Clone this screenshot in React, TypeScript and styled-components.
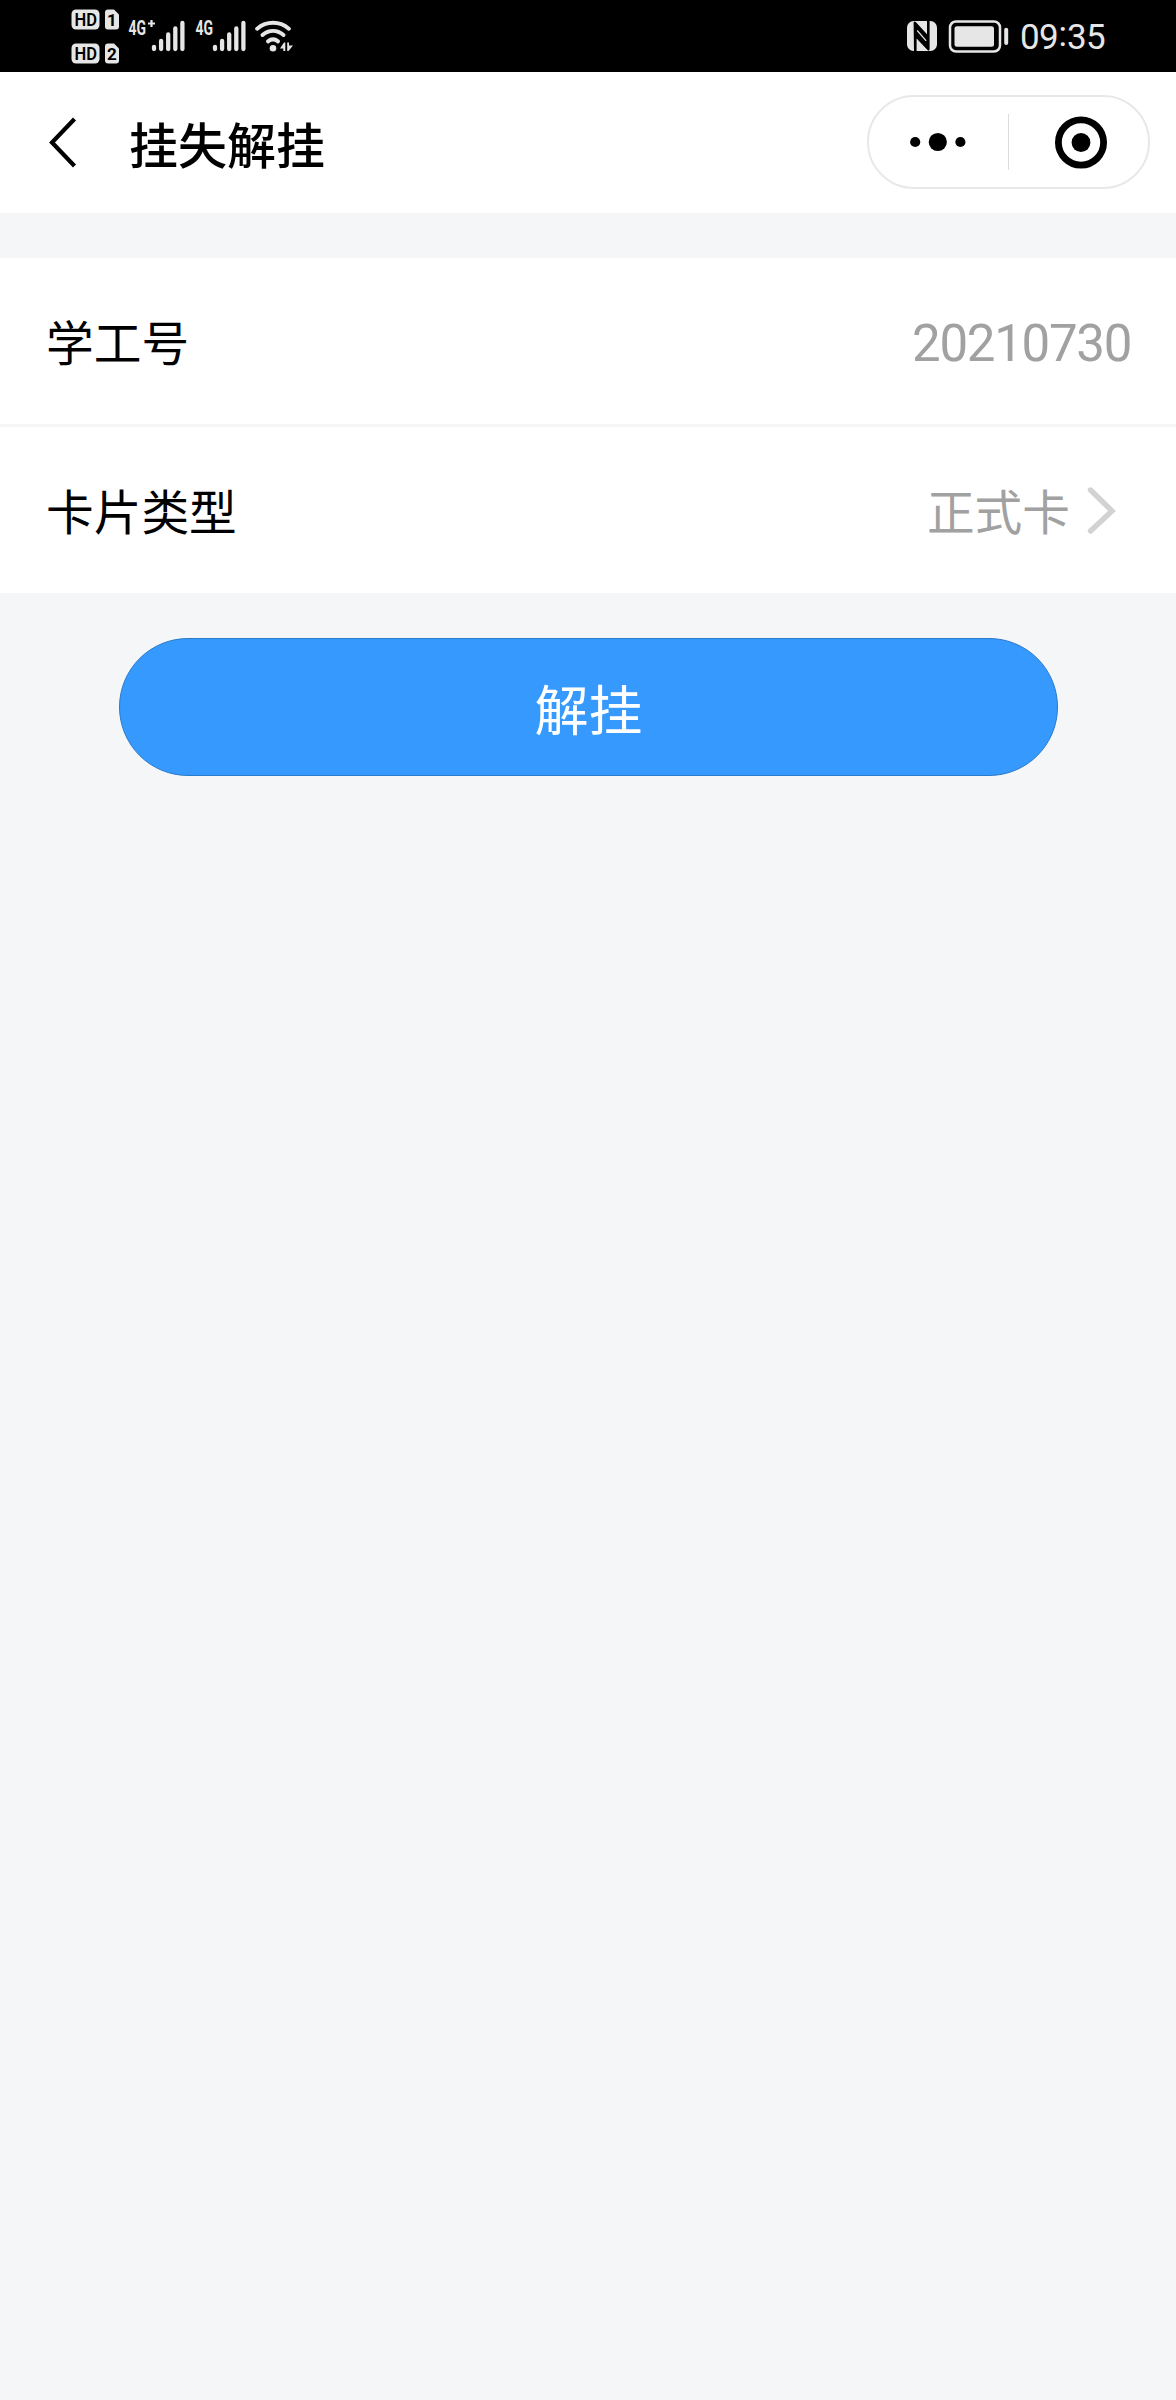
import React from 'react';
import styled, { createGlobalStyle } from 'styled-components';

const ink = '#e6e6e6';
const cjk = '"Noto Sans CJK SC", "Noto Sans", sans-serif';
const digits = 'Roboto, "Noto Sans", sans-serif';

const GlobalStyle = createGlobalStyle`
  * { box-sizing: border-box; }
  body { margin: 0; background: #f4f6f8; font-family: ${cjk}; }
`;

const Page = styled.div`
  display: flex;
  flex-direction: column;
  width: 1176px;
  min-height: 2400px;
  background: #f4f6f8;
`;

const StatusBar = styled.header`
  display: flex;
  justify-content: space-between;
  height: 72px;
  padding: 0 71px;
  background: #000;
  color: ${ink};
`;

const StatusGroup = styled.div`
  display: flex;
  height: 72px;
`;

const Glyph = styled.svg<{ $gap?: number }>`
  display: block;
  flex: none;
  margin-left: ${(p) => p.$gap ?? 0}px;
`;

const Clock = styled.time`
  display: flex;
  width: 85px;
  margin-left: 10px;
  padding-top: 2px;
  font-family: ${digits};
  font-size: 35px;
  line-height: 72px;
  letter-spacing: -0.7px;
  white-space: nowrap;
`;

const Colon = styled.span`
  width: 9.5px;
  margin-top: -3px;
  text-align: center;
`;

const NavBar = styled.nav`
  display: flex;
  align-items: center;
  height: 141px;
  padding: 0 26px 0 49px;
  background: #fff;
`;

const BackButton = styled.button`
  display: flex;
  width: 80px;
  padding: 0;
  border: 0;
  background: none;
`;

const Title = styled.h1`
  flex: 1;
  margin: 0;
  color: #000;
  font-size: 49px;
  font-weight: 500;
  line-height: 72px;
`;

const Capsule = styled.div`
  display: flex;
  align-items: center;
  width: 283px;
  height: 94px;
  margin-top: -1px;
  border: 2px solid #e8e8e8;
  border-radius: 47px;
`;

const CapsuleAction = styled.button`
  display: flex;
  flex: 1;
  justify-content: center;
  align-items: center;
  padding: 0;
  border: 0;
  background: none;
`;

const CapsuleDivider = styled.span`
  width: 1px;
  height: 56px;
  background: #dcdcdc;
`;

const Form = styled.main`
  display: flex;
  flex-direction: column;
  gap: 45px;
  padding-top: 45px;
`;

const Cells = styled.section`
  display: flex;
  flex-direction: column;
  gap: 3px;
`;

const Cell = styled.div`
  display: flex;
  align-items: center;
  justify-content: space-between;
  height: 166px;
  padding: 0 45px 0 46px;
  background: #fff;
  font-size: 47.7px;
  line-height: 72px;
`;

const Label = styled.span`
  margin-top: -1px;
  color: #000;
`;

const Value = styled.span`
  display: flex;
  align-items: center;
  margin-top: -1px;
  color: #a1a1a1;
`;

const NumericValue = styled(Value)`
  margin-top: 5px;
  font-family: ${digits};
  font-size: 51px;
  letter-spacing: -1.3px;
`;

const Submit = styled.button`
  align-self: center;
  width: 939px;
  height: 138px;
  margin-left: 1px;
  padding: 2px 0 0;
  border: 1px solid #2b7acb;
  border-radius: 69px;
  background: #3599fd;
  color: #fff;
  font-family: ${cjk};
  font-size: 54px;
  line-height: 80px;
`;

function HdBadges() {
  return (
    <Glyph width="49" height="72" fill={ink}>
      {[0, 34].map((dy, i) => (
        <g key={dy} transform={`translate(0 ${dy})`}>
          <rect x="0.5" y="9.5" width="28" height="20" rx="4.5" />
          <text x="3.5" y="26" fill="#000" fontFamily="Roboto" fontWeight="600" fontSize="18" textLength="22.5" lengthAdjust="spacingAndGlyphs">HD</text>
          <path d="M37 9.5H43L48 14.5V26.5Q48 29.5 45 29.5H37Q34 29.5 34 26.5V12.5Q34 9.5 37 9.5Z" />
          <text x="41" y="26" fill="#000" fontFamily="Roboto" fontWeight="700" fontSize="17" textAnchor="middle">{i + 1}</text>
        </g>
      ))}
    </Glyph>
  );
}

function Signal({ label, plus, gap }: { label: string; plus?: boolean; gap: number }) {
  const shift = plus ? 26 : 20;
  return (
    <Glyph $gap={gap} width={plus ? 57 : 51} height="72">
      <text x="0.5" y="34.5" fill={ink} fontFamily="Roboto" fontWeight="700" fontSize="19.5" textLength="17.5" lengthAdjust="spacingAndGlyphs">{label}</text>
      {plus && <path d="M23.5 20v7M20 23.5h7" stroke={ink} strokeWidth="2.2" />}
      <g stroke={ink} strokeWidth="4.3" strokeLinecap="round">
        {[47, 41, 34.5, 28.5, 23].map((top, i) => (
          <path key={top} d={`M${shift + i * 7.1} ${top}V49`} />
        ))}
      </g>
    </Glyph>
  );
}

function Wifi() {
  return (
    <Glyph $gap={9} width="40" height="72" fill="none" stroke={ink} strokeLinecap="round">
      <path d="M2.2 28.7C11.5 20.8 24.5 20.8 33.8 28.7" strokeWidth="4" />
      <path d="M7.5 35C14 29.7 22 29.7 28.5 35" strokeWidth="4" />
      <path d="M13 41.3C16 39 20 39 23 41.3" strokeWidth="4" />
      <circle cx="18" cy="48.3" r="3.3" fill={ink} stroke="none" />
      <path d="M30.3 42.5V51H28.3V48.5H25L29 42.5ZM32.2 42.5H34V45.5H38L33.5 51H32.2Z" fill={ink} stroke="none" />
    </Glyph>
  );
}

function Nfc() {
  return (
    <Glyph width="30" height="72">
      <rect x="0" y="21" width="30" height="30" rx="6.5" fill={ink} />
      <path d="M6.6 22.5Q7.3 20.8 9 22.3L20 34.2V20.5H22.6V49.5Q22 51.5 20.5 50L9.6 38.5V51.5H7Z" fill="#000" />
      <path d="M10.2 30.5L19.2 40.8" stroke={ink} strokeWidth="1.2" />
    </Glyph>
  );
}

function Battery() {
  return (
    <Glyph $gap={11} width="62" height="72">
      <rect x="2" y="21.5" width="50" height="30" rx="6" fill="none" stroke={ink} strokeWidth="2.5" />
      <rect x="6.5" y="26.3" width="39.5" height="20.5" rx="2.5" fill={ink} />
      <path d="M58.2 29.8V43" stroke={ink} strokeWidth="4" strokeLinecap="round" />
    </Glyph>
  );
}

export default function App() {
  return (
    <Page>
      <GlobalStyle />
      <StatusBar>
        <StatusGroup>
          <HdBadges />
          <Signal label="4G" plus gap={8} />
          <Signal label="4G" gap={10} />
          <Wifi />
        </StatusGroup>
        <StatusGroup>
          <Nfc />
          <Battery />
          <Clock>09<Colon>:</Colon>35</Clock>
        </StatusGroup>
      </StatusBar>
      <NavBar>
        <BackButton aria-label="返回">
          <Glyph width="28" height="52" fill="none" stroke="#000" strokeWidth="4.2">
            <path d="M25.5 2L3 25.5L25.5 49" />
          </Glyph>
        </BackButton>
        <Title>挂失解挂</Title>
        <Capsule>
          <CapsuleAction aria-label="更多">
            <Glyph width="58" height="20">
              <circle cx="5.2" cy="10" r="5.1" />
              <circle cx="27.8" cy="10" r="9.1" />
              <circle cx="50.4" cy="10" r="5.1" />
            </Glyph>
          </CapsuleAction>
          <CapsuleDivider />
          <CapsuleAction aria-label="关闭">
            <Glyph width="58" height="54">
              <circle cx="31" cy="27.5" r="22.6" fill="none" stroke="#000" strokeWidth="6.8" />
              <circle cx="31" cy="27.5" r="9.4" />
            </Glyph>
          </CapsuleAction>
        </Capsule>
      </NavBar>
      <Form>
        <Cells>
          <Cell>
            <Label>学工号</Label>
            <NumericValue>20210730</NumericValue>
          </Cell>
          <Cell>
            <Label>卡片类型</Label>
            <Value>
              正式卡
              <Glyph $gap={15} width="46" height="50" fill="none" stroke="#d2d2d2" strokeWidth="5.4" strokeLinecap="round">
                <path d="M5.5 5L27 26L5.5 46" />
              </Glyph>
            </Value>
          </Cell>
        </Cells>
        <Submit>解挂</Submit>
      </Form>
    </Page>
  );
}
